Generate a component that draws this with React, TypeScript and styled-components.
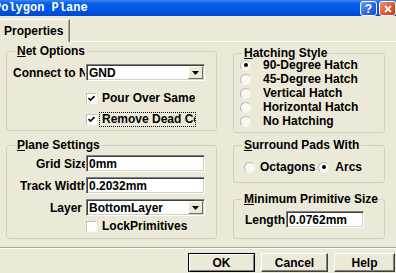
import React from "react";
import styled, { createGlobalStyle } from "styled-components";

const GlobalStyle = createGlobalStyle`
  html, body {
    margin: 0;
    padding: 0;
    background: #ece9d8;
  }
`;

const Window = styled.div`
  width: 396px;
  height: 273px;
  overflow: hidden;
  background: #ece9d8;
  display: flex;
  flex-direction: column;
  font-family: "Liberation Sans", Arial, sans-serif;
  font-weight: bold;
  font-size: 12px;
  color: #000;
`;

const TitleBar = styled.div`
  height: 16px;
  flex: none;
  display: flex;
  align-items: flex-start;
  background: linear-gradient(#3a86f5 0%, #0a60e8 20%, #0055e3 65%, #0048cc 100%);
`;

const TitleText = styled.span`
  flex: 1;
  margin: 1px 0 0 -6px;
  font-family: "Liberation Mono", "Courier New", monospace;
  font-weight: bold;
  font-size: 12px;
  line-height: 14px;
  color: #fff;
  white-space: nowrap;
`;

const CaptionButton = styled.div<{ $kind: "help" | "close" }>`
  width: 17px;
  height: 15px;
  margin: 1px 0 0 2px;
  flex: none;
  border: 1px solid #fff;
  border-radius: 3px;
  box-sizing: border-box;
  display: flex;
  align-items: center;
  justify-content: center;
  background: ${({ $kind }) =>
    $kind === "help"
      ? "linear-gradient(135deg, #6aa0fb 0%, #2a68e2 55%, #1b4fc6 100%)"
      : "linear-gradient(135deg, #f29372 0%, #e2552e 55%, #c93b17 100%)"};
`;

const CaptionGlyph = styled.span`
  color: #fff;
  font-family: "Liberation Sans", Arial, sans-serif;
  font-weight: bold;
  font-size: 12px;
  line-height: 12px;
`;

const TabStrip = styled.div`
  height: 26px;
  flex: none;
  display: flex;
  align-items: flex-end;
  box-sizing: border-box;
  border-bottom: 1px solid #fff;
`;

const Tab = styled.div`
  height: 23px;
  width: 70px;
  margin-bottom: -1px;
  box-sizing: border-box;
  border-top: 1px solid #fff;
  border-right: 1px solid #716f64;
  box-shadow: inset -1px 0 #aca899;
  background: #ece9d8;
  padding: 4px 0 0 4px;
`;

const Body = styled.div`
  height: 200px;
  flex: none;
  display: flex;
  gap: 16px;
  padding-left: 6px;
`;

const Column = styled.div<{ $top: number; $w: number }>`
  width: ${({ $w }) => $w}px;
  padding-top: ${({ $top }) => $top}px;
  display: flex;
  flex-direction: column;
`;

const Group = styled.fieldset<{ $h: number; $mt?: number }>`
  margin: ${({ $mt }) => $mt ?? 0}px 0 0 0;
  padding: 0;
  min-width: 0;
  height: ${({ $h }) => $h}px;
  box-sizing: border-box;
  border: 1px solid #d0d0bf;
  border-radius: 3px;
`;

const Legend = styled.legend`
  padding: 0 2px;
  margin-left: 8px;
  height: 14px;
  line-height: 14px;
`;

const GroupBody = styled.div<{ $pt: number; $pl: number }>`
  padding: ${({ $pt }) => $pt}px 0 0 ${({ $pl }) => $pl}px;
  display: flex;
  flex-direction: column;
`;

const FieldRow = styled.div<{ $mt?: number }>`
  display: flex;
  align-items: center;
  margin-top: ${({ $mt }) => $mt ?? 0}px;
  white-space: nowrap;
`;

const ClipLabel = styled.div<{ $w: number; $right?: boolean }>`
  width: ${({ $w }) => $w}px;
  overflow: hidden;
  white-space: nowrap;
  text-align: ${({ $right }) => ($right ? "right" : "left")};
  margin-right: 1px;
`;

const Shifted = styled.span<{ $over: number }>`
  display: inline-block;
  margin-right: ${({ $over }) => -$over}px;
`;

const Sunken = styled.div<{ $w: number }>`
  width: ${({ $w }) => $w}px;
  height: 17px;
  box-sizing: border-box;
  background: #fff;
  border: 1px solid;
  border-color: #808080 #fff #fff #808080;
  box-shadow: inset 1px 1px #404040, inset -1px -1px #d4d0c8;
  display: flex;
  align-items: center;
  padding-left: 2px;
  line-height: 14px;
`;

const ComboText = styled.span`
  flex: 1;
`;

const DropButton = styled.div`
  width: 15px;
  height: 13px;
  margin-right: 1px;
  box-sizing: border-box;
  background: #ece9d8;
  border: 1px solid;
  border-color: #fff #716f64 #716f64 #fff;
  display: flex;
  align-items: center;
  justify-content: center;
`;

const CheckRow = styled.div<{ $mt: number; $ml: number }>`
  display: flex;
  align-items: center;
  height: 16px;
  margin: ${({ $mt }) => $mt}px 0 0 ${({ $ml }) => $ml}px;
  white-space: nowrap;
`;

const Box = styled.div`
  width: 11px;
  height: 11px;
  flex: none;
  box-sizing: border-box;
  background: #fff;
  border: 1px solid;
  border-color: #c4c2b8 #f7f6f2 #f7f6f2 #c4c2b8;
  display: flex;
  align-items: center;
  justify-content: center;
`;

const CheckText = styled.div<{ $focus?: boolean }>`
  width: 97px;
  height: 15px;
  margin-left: 2px;
  padding-left: 2px;
  box-sizing: border-box;
  overflow: hidden;
  line-height: 13px;
  border: 1px ${({ $focus }) => ($focus ? "dotted #000" : "solid transparent")};
`;

const RadioList = styled.div<{ $mt: number; $pl: number }>`
  margin-top: ${({ $mt }) => $mt}px;
  padding-left: ${({ $pl }) => $pl}px;
  display: flex;
  flex-direction: column;
`;

const RadioInline = styled.div<{ $mt: number; $pl: number }>`
  margin-top: ${({ $mt }) => $mt}px;
  padding-left: ${({ $pl }) => $pl}px;
  display: flex;
`;

const RadioItem = styled.div<{ $gap: number; $ml?: number }>`
  height: 14px;
  display: flex;
  align-items: center;
  gap: ${({ $gap }) => $gap}px;
  margin-left: ${({ $ml }) => $ml ?? 0}px;
  white-space: nowrap;
`;

const RadioCircle = styled.div<{ $on: boolean }>`
  width: 11px;
  height: 11px;
  flex: none;
  box-sizing: border-box;
  border-radius: 50%;
  border: 1px solid;
  border-color: #b9b7ad #f4f3ee #f4f3ee #b9b7ad;
  background: #f9f8f4;
  display: flex;
  align-items: center;
  justify-content: center;

  &::after {
    content: "";
    width: 4px;
    height: 4px;
    border-radius: 50%;
    background: ${({ $on }) => ($on ? "#000" : "transparent")};
  }
`;

const Footer = styled.div`
  flex: 1;
  padding-top: 5px;
  display: flex;
  flex-direction: column;
`;

const Separator = styled.div`
  height: 2px;
  box-sizing: border-box;
  border-top: 1px solid #aca899;
  border-bottom: 1px solid #fff;
`;

const ButtonRow = styled.div`
  margin-top: 4px;
  padding-left: 188px;
  display: flex;
  gap: 6px;
`;

const PushButton = styled.div<{ $w: number; $default?: boolean }>`
  width: ${({ $w }) => $w}px;
  height: 19px;
  flex: none;
  box-sizing: border-box;
  display: flex;
  align-items: center;
  justify-content: center;
  background: #ece9d8;
  border: 1px solid;
  border-color: ${({ $default }) =>
    $default ? "#000" : "#fff #404040 #404040 #fff"};
  box-shadow: ${({ $default }) =>
    $default
      ? "inset 1px 1px #fff, inset -1px -1px #808080"
      : "inset -1px -1px #808080"};
`;

const Check = () => (
  <svg width="7" height="7" viewBox="0 0 7 7">
    <path d="M0.5 3 L2.5 5 L6.5 1" fill="none" stroke="#000" strokeWidth="1.6" />
  </svg>
);

const Arrow = () => (
  <svg width="7" height="4" viewBox="0 0 7 4">
    <path d="M0 0 H7 L3.5 4 Z" fill="#000" />
  </svg>
);

const Combo = ({ value, width }: { value: string; width: number }) => (
  <Sunken $w={width}>
    <ComboText>{value}</ComboText>
    <DropButton>
      <Arrow />
    </DropButton>
  </Sunken>
);

const hatching = [
  "90-Degree Hatch",
  "45-Degree Hatch",
  "Vertical Hatch",
  "Horizontal Hatch",
  "No Hatching",
];

const App = () => (
  <>
    <GlobalStyle />
    <Window>
      <TitleBar>
        <TitleText>Polygon Plane</TitleText>
        <CaptionButton $kind="help">
          <CaptionGlyph>?</CaptionGlyph>
        </CaptionButton>
        <CaptionButton $kind="close">
          <svg width="8" height="8" viewBox="0 0 8 8">
            <path d="M1 1 L7 7 M7 1 L1 7" stroke="#fff" strokeWidth="1.8" />
          </svg>
        </CaptionButton>
      </TitleBar>

      <TabStrip>
        <Tab>Properties</Tab>
      </TabStrip>

      <Body>
        <Column $top={2} $w={211}>
          <Group $h={87}>
            <Legend>
              <u>N</u>et Options
            </Legend>
            <GroupBody $pt={6} $pl={6}>
              <FieldRow>
                <ClipLabel $w={72}>Connect to Net</ClipLabel>
                <Combo value="GND" width={119} />
              </FieldRow>
              <CheckRow $mt={9} $ml={73}>
                <Box>
                  <Check />
                </Box>
                <CheckText>Pour Over Same</CheckText>
              </CheckRow>
              <CheckRow $mt={5} $ml={73}>
                <Box>
                  <Check />
                </Box>
                <CheckText $focus>Remove Dead Copper</CheckText>
              </CheckRow>
            </GroupBody>
          </Group>

          <Group $h={101} $mt={7}>
            <Legend>
              <u>P</u>lane Settings
            </Legend>
            <GroupBody $pt={3} $pl={0}>
              <FieldRow>
                <ClipLabel $w={78} $right>
                  <Shifted $over={3}>Grid Size</Shifted>
                </ClipLabel>
                <Sunken $w={119}>0mm</Sunken>
              </FieldRow>
              <FieldRow $mt={5}>
                <ClipLabel $w={78} $right>
                  <Shifted $over={3}>Track Width</Shifted>
                </ClipLabel>
                <Sunken $w={119}>0.2032mm</Sunken>
              </FieldRow>
              <FieldRow $mt={5}>
                <ClipLabel $w={78} $right>
                  <Shifted $over={-3}>Layer</Shifted>
                </ClipLabel>
                <Combo value="BottomLayer" width={119} />
              </FieldRow>
              <CheckRow $mt={2} $ml={79}>
                <Box />
                <CheckText>LockPrimitives</CheckText>
              </CheckRow>
            </GroupBody>
          </Group>
        </Column>

        <Column $top={4} $w={152}>
          <Group $h={87}>
            <Legend>
              <u>H</u>atching Style
            </Legend>
            <RadioList $mt={-2} $pl={6}>
              {hatching.map((label, i) => (
                <RadioItem key={label} $gap={12}>
                  <RadioCircle $on={i === 0} />
                  {label}
                </RadioItem>
              ))}
            </RadioList>
          </Group>

          <Group $h={45} $mt={5}>
            <Legend>
              <u>S</u>urround Pads With
            </Legend>
            <RadioInline $mt={8} $pl={10}>
              <RadioItem $gap={5}>
                <RadioCircle $on={false} />
                Octagons
              </RadioItem>
              <RadioItem $gap={6} $ml={3}>
                <RadioCircle $on />
                Arcs
              </RadioItem>
            </RadioInline>
          </Group>

          <Group $h={47} $mt={9}>
            <Legend>
              <u>M</u>inimum Primitive Size
            </Legend>
            <GroupBody $pt={5} $pl={11}>
              <FieldRow>
                <ClipLabel $w={40}>Length</ClipLabel>
                <Sunken $w={78}>0.0762mm</Sunken>
              </FieldRow>
            </GroupBody>
          </Group>
        </Column>
      </Body>

      <Footer>
        <Separator />
        <ButtonRow>
          <PushButton $w={67} $default>
            OK
          </PushButton>
          <PushButton $w={67}>Cancel</PushButton>
          <PushButton $w={61}>Help</PushButton>
        </ButtonRow>
      </Footer>
    </Window>
  </>
);

export default App;
